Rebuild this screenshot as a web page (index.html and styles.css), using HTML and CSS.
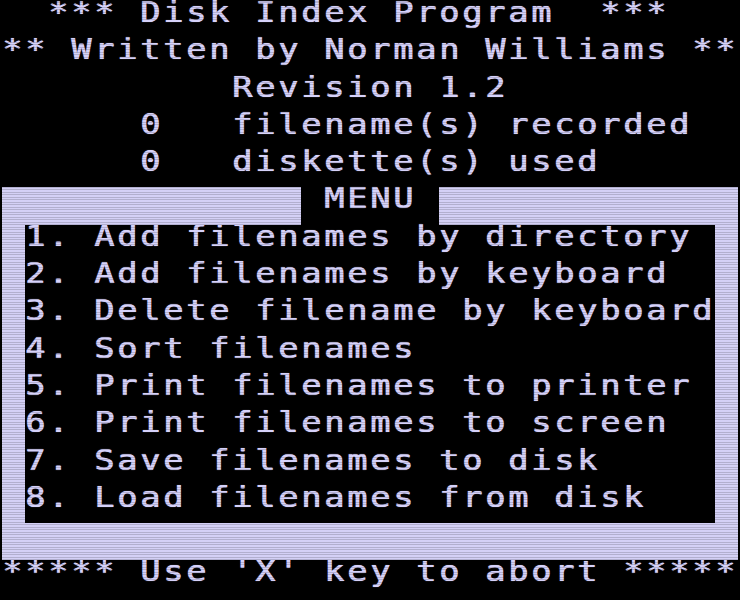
FILE: index.html
```html
<!DOCTYPE html>
<html>
<head>
<meta charset="utf-8">
<link rel="stylesheet" href="styles.css">
</head>
<body>
<div class="screen">
  <div class="row"><span class="txt">  *** Disk Index Program  ***</span></div>
  <div class="row"><span class="txt">** Written by Norman Williams **</span></div>
  <div class="row"><span class="txt">          Revision 1.2</span></div>
  <div class="row"><span class="txt">      0   filename(s) recorded</span></div>
  <div class="row"><span class="txt">      0   diskette(s) used</span></div>
  <div class="menu">
    <div class="menu-top">
      <div class="band"></div>
      <div class="title row"><span class="txt"> MENU </span></div>
      <div class="band"></div>
    </div>
    <div class="menu-body">
      <div class="row"><span class="txt">1. Add filenames by directory</span></div>
      <div class="row"><span class="txt">2. Add filenames by keyboard</span></div>
      <div class="row"><span class="txt">3. Delete filename by keyboard</span></div>
      <div class="row"><span class="txt">4. Sort filenames</span></div>
      <div class="row"><span class="txt">5. Print filenames to printer</span></div>
      <div class="row"><span class="txt">6. Print filenames to screen</span></div>
      <div class="row"><span class="txt">7. Save filenames to disk</span></div>
      <div class="row"><span class="txt">8. Load filenames from disk</span></div>
    </div>
    <div class="menu-bottom"></div>
  </div>
  <div class="row"><span class="txt">***** Use 'X' key to abort *****</span></div>
</div>
</body>
</html>
```

FILE: styles.css
```css
html, body {
  margin: 0;
  padding: 0;
  background: #000;
}

.screen {
  position: relative;
  width: 740px;
  height: 600px;
  box-sizing: border-box;
  padding: 1px 0 0 2px;
  background: #000;
  color: #d6d2fa;
  font-family: "DejaVu Sans Mono", "Liberation Mono", monospace;
  font-size: 28px;
}

.screen::after {
  content: "";
  position: absolute;
  inset: 0;
  pointer-events: none;
  background: repeating-linear-gradient(to bottom,
    rgba(0, 0, 0, 0) 0px,
    rgba(0, 0, 0, 0) 1.5px,
    rgba(0, 0, 0, 0.16) 1.5px,
    rgba(0, 0, 0, 0.16) 2.5px);
}

.row {
  height: 37.3px;
  display: flex;
  align-items: flex-start;
  white-space: pre;
}

.txt {
  display: inline-block;
  line-height: 24.6px;
  letter-spacing: 2.31px;
  transform: scaleX(1.2);
  transform-origin: 0 0;
  text-shadow: 0.6px 0 0 #d6d2fa, 0 0 1px rgba(214, 210, 250, 0.6);
}

.menu {
  width: 736px;
  height: 373px;
  background: #d4d0f6;
  display: flex;
  flex-direction: column;
}

.menu-top {
  display: grid;
  grid-template-columns: 299px 138px 299px;
  height: 37.3px;
}

.title {
  background: #000;
}

.menu-body {
  margin: 0 23px;
  height: 298.4px;
  background: #000;
}

.menu-bottom {
  height: 37.3px;
}
```
